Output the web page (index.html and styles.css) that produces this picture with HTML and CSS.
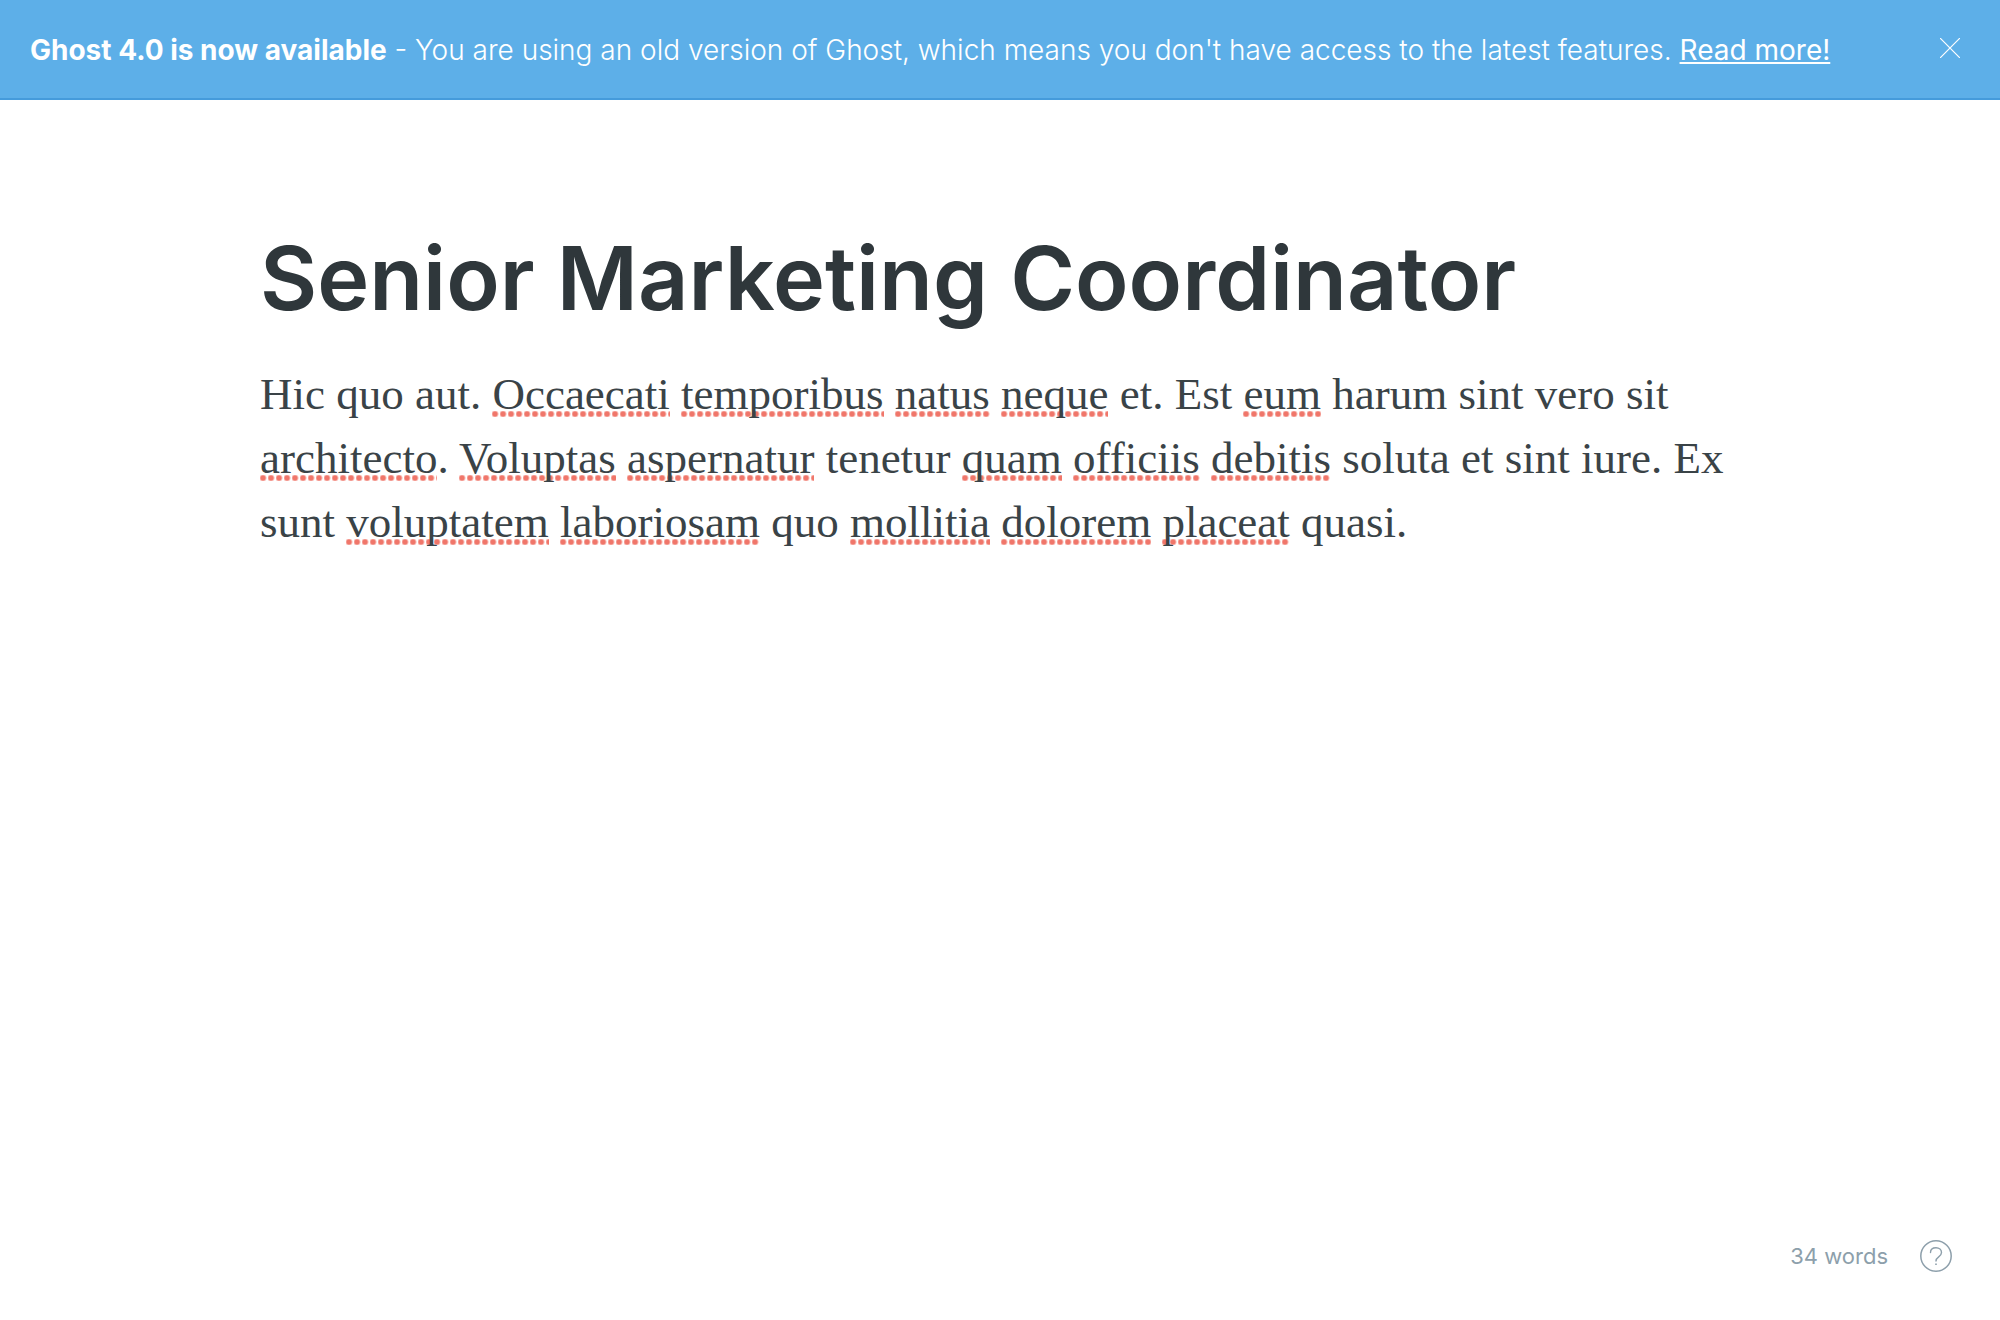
FILE: index.html
```html
<!DOCTYPE html>
<html lang="en">
<head>
<meta charset="utf-8">
<meta name="viewport" content="width=device-width, initial-scale=1">
<title>Senior Marketing Coordinator</title>
<link rel="stylesheet" href="styles.css">
</head>
<body>
<div class="app">
  <aside class="alert">
    <p class="alert-text"><strong>Ghost 4.0 is now available</strong> - You are using an old version of Ghost, which means you don't have access to the latest features. <a class="alert-link" href="#">Read more!</a></p>
    <button class="alert-close" type="button" aria-label="Close">
      <svg viewBox="0 0 20 20" width="20" height="20" fill="none" stroke="currentColor" stroke-width="1.2" aria-hidden="true"><path d="M0 0l20 20M20 0L0 20"/></svg>
    </button>
  </aside>
  <main class="editor">
    <input class="editor-title" type="text" aria-label="Post title" spellcheck="false" value="Senior Marketing Coordinator">
    <div class="editor-body" role="textbox" aria-multiline="true" aria-label="Post content" contenteditable="true" spellcheck="false">
      <p>Hic quo aut. <span class="typo">Occaecati</span> <span class="typo">temporibus</span> <span class="typo">natus</span> <span class="typo">neque</span> et. Est <span class="typo">eum</span> harum sint vero sit <span class="typo">architecto</span>. <span class="typo">Voluptas</span> <span class="typo">aspernatur</span> tenetur <span class="typo">quam</span> <span class="typo">officiis</span> <span class="typo">debitis</span> soluta et sint iure. Ex sunt <span class="typo">voluptatem</span> <span class="typo">laboriosam</span> quo <span class="typo">mollitia</span> <span class="typo">dolorem</span> <span class="typo">placeat</span> quasi.</p>
    </div>
  </main>
  <footer class="status">
    <span>34 words</span>
    <a class="help" href="#" aria-label="Help">
      <svg viewBox="0 0 32 32" width="32" height="32" fill="none" stroke="currentColor" aria-hidden="true"><circle cx="16" cy="16" r="15.2" stroke-width="1.5"/><path d="M10.500 12.500c0-3 2.300-4.800 5.500-4.800s5.500 2 5.500 4.900c0 4.400-5.500 4.200-5.500 8.400" stroke-width="1.400" stroke-linecap="round"/><path d="M15.200 24.200h1.600" stroke-width="1.600"/></svg>
    </a>
  </footer>
</div>
</body>
</html>
```

FILE: styles.css
```css
* {
  box-sizing: border-box;
}

body {
  margin: 0;
  background: #fff;
  font-family: Inter, "Liberation Sans", sans-serif;
}

.app {
  display: flex;
  flex-direction: column;
  min-height: 100vh;
}

.alert {
  display: flex;
  align-items: center;
  justify-content: space-between;
  min-height: 100px;
  padding: 0 40px 2px 30px;
  border-bottom: 2px solid #459bdb;
  background: #5dafe8;
  color: #fff;
}

.alert-text {
  margin: 0;
  padding-top: 4px;
  font-size: 28px;
  font-weight: 300;
  line-height: 40px;
}

.alert-text strong {
  font-weight: 700;
}

.alert-link {
  color: inherit;
  font-weight: 400;
  text-decoration-thickness: 2px;
  text-underline-offset: 2px;
}

.alert-close {
  display: flex;
  padding: 0;
  border: 0;
  background: none;
  color: inherit;
}

.editor {
  flex: 1;
  width: 100%;
  max-width: 1480px;
  margin: 0 auto;
  padding-top: 122px;
}

.editor-title {
  display: block;
  width: 100%;
  height: 112px;
  padding: 0;
  border: 0;
  outline: 0;
  background: none;
  color: #2f373b;
  font-family: inherit;
  font-size: 88px;
  font-weight: 600;
}

.editor-body {
  margin-top: 28px;
  outline: 0;
  color: #3a4347;
  font-family: "Liberation Serif", serif;
  font-size: 45px;
  line-height: 64px;
}

.editor-body p {
  margin: 0;
}

.typo {
  background: radial-gradient(circle at 3px 3px, #f0766a 2px, #f0766a00 4px) 0 42px / 8px 6px repeat-x;
}

.status {
  display: flex;
  align-items: center;
  justify-content: flex-end;
  gap: 32px;
  padding: 0 48px 48px;
  color: #8d9fab;
  font-size: 22px;
  line-height: 32px;
}

.help {
  display: flex;
  color: inherit;
}
```
